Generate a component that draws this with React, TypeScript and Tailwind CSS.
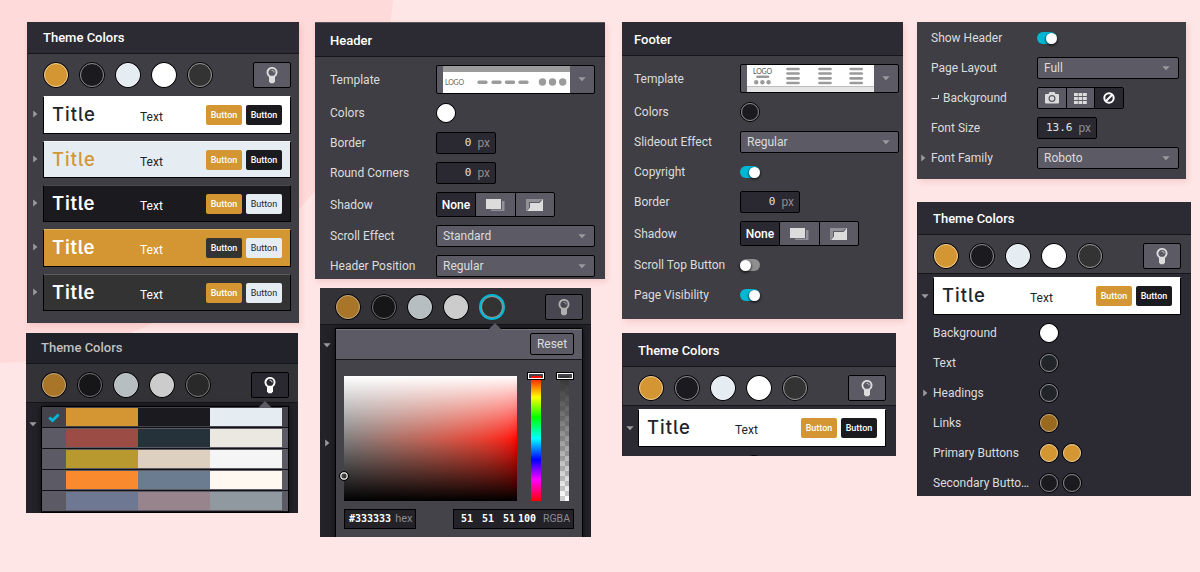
import type { ReactNode } from "react";

const ROBOTO = "font-['Roboto','Liberation_Sans',sans-serif]";
const MONO = "font-['DejaVu_Sans_Mono','Liberation_Mono',monospace]";

function Bulb({ className }: { className: string }) {
  return (
    <svg width="12" height="17" viewBox="0 0 12 17" className={className} fill="none">
      <path d="M3.8 9.6C2.5 8.4 1.4 7.3 1.4 5.4A4.6 4.5 0 0 1 10.600 5.4C10.600 7.3 9.500 8.4 8.200 9.6" stroke="currentColor" strokeWidth="1.9" />
      <path d="M3 8.8H9V14.2L7.6 16.2H4.4L3 14.2Z" fill="currentColor" />
      <path d="M5.6 3.3C7.2 3.2 8 4 8 5.4" stroke="currentColor" strokeWidth="1" />
    </svg>
  );
}

function BulbButton({ tone = "normal" }: { tone?: "normal" | "dim" | "active" }) {
  const tones = {
    normal: "bg-[#5b5a65] text-[#dcdcdc]",
    dim: "bg-[#484751] text-[#b0b0b0]",
    active: "bg-[#2a2932] text-white",
  };
  return (
    <div className={`flex h-[26px] w-[38px] items-center justify-center rounded-[2px] border border-black ${tones[tone]}`}>
      <Bulb className="block" />
    </div>
  );
}

function Swatch({ fill, ring, small }: { fill: string; ring: string; small?: boolean }) {
  return (
    <div className={`shrink-0 rounded-full border border-black ${small ? "size-5" : "size-[26px]"}`}>
      <div className={`size-full rounded-full border ${fill} ${ring}`} />
    </div>
  );
}

const BRIGHT = [
  ["bg-[#d39632]", "border-[#f0cf94]"],
  ["bg-[#1b1b1f]", "border-[#8c8c8e]"],
  ["bg-[#e5ecf2]", "border-[#f2f6f9]"],
  ["bg-white", "border-white"],
  ["bg-[#333333]", "border-[#969696]"],
];
const DIM = [
  ["bg-[#a97629]", "border-[#c4a87b]"],
  ["bg-[#161619]", "border-[#707072]"],
  ["bg-[#b7bec2]", "border-[#c2c6c9]"],
  ["bg-[#cccccc]", "border-[#cfcfcf]"],
  ["bg-[#292929]", "border-[#787878]"],
];

function SwatchRow({ dim, active, tone }: { dim?: boolean; active?: boolean; tone?: "normal" | "dim" | "active" }) {
  return (
    <div className="flex w-[248px] items-center justify-between">
      <div className="flex gap-2.5">
        {(dim ? DIM : BRIGHT).map(([fill, ring], i) =>
          active && i === 4 ? (
            <div key={i} className="size-[26px] rounded-full bg-[#00b8d4] p-[2px]">
              <div className="size-full rounded-full border border-[#a09a98] bg-[#333333]" />
            </div>
          ) : (
            <Swatch key={i} fill={fill} ring={ring} />
          ),
        )}
      </div>
      <BulbButton tone={tone} />
    </div>
  );
}

function Caret({ down, className = "" }: { down?: boolean; className?: string }) {
  return down ? (
    <svg width="8" height="5" viewBox="0 0 8 5" className={`shrink-0 ${className}`}>
      <path d="M0.3 0.3H7.7L4 4.3Z" fill="#9a9a9d" />
    </svg>
  ) : (
    <svg width="5" height="8" viewBox="0 0 5 8" className={`shrink-0 ${className}`}>
      <path d="M0.2 0.5V7.5L4.4 4Z" fill="#9a9a9d" />
    </svg>
  );
}

type CardProps = { bg: string; title: string; text: string; b1: string; b2: string; height?: string };

function Card({ bg, title, text, b1, b2, height = "h-[38px]" }: CardProps) {
  return (
    <div className={`flex w-[248px] shrink-0 items-start border border-black pl-2 ${height} ${bg}`}>
      <div className={`w-[88px] pt-1 font-['Inter','Noto_Sans',sans-serif] text-[18.500px] leading-[26px] [font-feature-settings:'cv05'] ${title}`}>
        Title
      </div>
      <div className={`w-[66px] pt-[11px] text-[12px] leading-[18px] ${text}`}>Text</div>
      <div className="flex gap-1 pt-2 text-[9px] leading-[21px]">
        <div className={`h-5 w-9 rounded-[2px] text-center ${b1}`}>Button</div>
        <div className={`h-5 w-9 rounded-[2px] text-center ${b2}`}>Button</div>
      </div>
    </div>
  );
}

const GOLD = "bg-[#d39632] text-white font-medium";
const INK = "bg-[#1b1b1f] text-white font-medium";
const ICE = "bg-[#e5ecf2] text-[#23262b]";
const MEDIUM = "font-medium tracking-[1px]";
const STRONG = "font-semibold tracking-[0.7px] text-white";

const CARDS: CardProps[] = [
  { bg: "bg-white border-t-white", title: `text-[#212529] ${MEDIUM}`, text: "text-[#212529]", b1: GOLD, b2: INK },
  { bg: "bg-[#e5ecf2] border-t-[#f2f6f9]", title: `text-[#d39632] ${MEDIUM}`, text: "text-[#212529]", b1: GOLD, b2: INK, height: "h-[37px]" },
  { bg: "bg-[#1b1b1f] border-t-[#4a4a4e]", title: STRONG, text: "text-white", b1: GOLD, b2: ICE, height: "h-[37px]" },
  { bg: "bg-[#d39632] border-t-[#e3b263]", title: STRONG, text: "text-white", b1: "bg-[#333333] text-white font-medium", b2: ICE },
  { bg: "bg-[#333333] border-t-[#5c5c5c]", title: STRONG, text: "text-white", b1: GOLD, b2: ICE, height: "h-[37px]" },
];

function PanelTitle({ children, className }: { children: ReactNode; className: string }) {
  return (
    <div className={`flex shrink-0 items-center border-b border-[#16161a] text-[13px] font-medium ${className}`}>{children}</div>
  );
}

function Row({ label, children, height = "h-[30px]", width = "w-[106px]" }: { label?: ReactNode; children: ReactNode; height?: string; width?: string }) {
  return (
    <div className={`flex shrink-0 items-center ${height}`}>
      <div className={`flex shrink-0 items-center whitespace-nowrap ${width}`}>{label}</div>
      {children}
    </div>
  );
}

function Select({ children, width = "w-[159px]" }: { children: ReactNode; width?: string }) {
  return (
    <div className={`flex h-[22px] items-center justify-between rounded-[2px] border border-black bg-[#5b5a65] pr-2 pl-1.5 ${width}`}>
      {children}
      <Caret down />
    </div>
  );
}

function PxInput({ value }: { value: string }) {
  return (
    <div className="flex h-[22px] w-[60px] items-center justify-end rounded-[2px] border border-black bg-[#2a2932] pr-[5px]">
      <span className={`mr-1.5 text-[11px] text-[#e2e2e2] ${MONO}`}>{value}</span>
      <span className="text-[12px] text-[#8b8b90]">px</span>
    </div>
  );
}

function Toggle({ on }: { on?: boolean }) {
  return (
    <div className={`flex h-3 w-5 items-center rounded-full ${on ? "justify-end bg-[#00b8d4]" : "bg-[#8f8f8f]"}`}>
      <div className="size-[11px] rounded-full bg-white shadow-[0_1px_2px_1px_rgba(0,0,0,0.5)]" />
    </div>
  );
}

function ShadowPicker() {
  return (
    <div className="flex h-[25px] w-[119px] overflow-hidden rounded-[2px] border border-black bg-[#5b5a65]">
      <div className="flex w-[38px] shrink-0 items-center justify-center bg-[#2a2932] text-[12px] font-medium text-white">None</div>
      <div className="flex w-10 shrink-0 items-center justify-center border-l border-black">
        <svg width="19" height="12" viewBox="0 0 19 12">
          <path d="M16 2H18.500V12H5V10.500H16Z" fill="#929198" />
          <rect width="15" height="10" fill="#dcdcdc" />
        </svg>
      </div>
      <div className="flex w-[39px] shrink-0 items-center justify-center border-l border-black">
        <svg width="18" height="12" viewBox="0 0 18 12">
          <path d="M0 0H17V1H15L13 3H3V9L1 11V12H0Z" fill="#929198" />
          <path d="M17 0V12H1L4 8.500V4H13.500Z" fill="#dcdcdc" />
        </svg>
      </div>
    </div>
  );
}

function TemplateSelect({ children }: { children: ReactNode }) {
  return (
    <div className="flex h-[29px] w-[159px] items-center rounded-[2px] border border-black bg-[#5b5a65] pl-1.5">
      {children}
      <Caret down className="ml-2" />
    </div>
  );
}

function HeaderThumb() {
  return (
    <svg width="127" height="27" viewBox="0 0 127 27">
      <rect width="127" height="27" fill="#fff" />
      <rect width="127" height="6" fill="#9b9b9b" />
      <text x="2" y="18.600" fontSize="7" fill="#666" fontFamily="Lato, sans-serif" textLength="19">LOGO</text>
      <path d="M36 16.300H43M50 16.300H57M63.500 16.300H70.500M77 16.300H84" stroke="#9b9b9b" strokeWidth="3.400" strokeLinecap="round" />
      <circle cx="99.500" cy="16" r="3.700" fill="#9b9b9b" />
      <circle cx="109.500" cy="16" r="3.700" fill="#9b9b9b" />
      <circle cx="119.700" cy="16" r="3.700" fill="#9b9b9b" />
    </svg>
  );
}

function FooterThumb() {
  return (
    <svg width="127" height="27" viewBox="0 0 127 27">
      <rect width="127" height="27" fill="#fff" />
      <rect y="21" width="127" height="6" fill="#e4e4e4" />
      <rect y="21" width="127" height="1" fill="#bdbdbd" />
      <text x="6" y="8.600" fontSize="7" fill="#555" fontFamily="Lato, sans-serif" textLength="19">LOGO</text>
      <path d="M10.500 11.700H21" stroke="#9b9b9b" strokeWidth="2.600" strokeLinecap="round" />
      <circle cx="9.200" cy="17.300" r="2.200" fill="#9b9b9b" />
      <circle cx="15.400" cy="17.300" r="2.200" fill="#9b9b9b" />
      <circle cx="21.600" cy="17.300" r="2.200" fill="#9b9b9b" />
      {[40.5, 72.5, 103.7].map((x) =>
        [4, 8.5, 13.3, 18].map((y) => (
          <path key={`${x}-${y}`} d={`M${x} ${y}h11`} stroke="#9b9b9b" strokeWidth="2.700" strokeLinecap="round" />
        )),
      )}
    </svg>
  );
}

function ThemeCardsPanel() {
  return (
    <div className="ml-px h-[301px] w-[272px] border-l border-[#2c2b33] bg-[#3f3e45] shadow-[2px_3px_6px_rgba(180,60,60,0.15)]">
      <PanelTitle className="h-8 bg-[#2c2b33] pl-[15px] text-white">Theme Colors</PanelTitle>
      <div className="pt-2 pb-2 pl-[15px]">
        <SwatchRow />
      </div>
      <div className="flex flex-col gap-[7px]">
        {CARDS.map((card, i) => (
          <div key={i} className="flex items-center">
            <div className="w-[15px] pb-0.5 pl-[5px]">
              <Caret />
            </div>
            <Card {...card} />
          </div>
        ))}
      </div>
    </div>
  );
}

const PALETTES = [
  ["bg-[#d39632]", "bg-[#1b1b1f]", "bg-[#e5ecf2]"],
  ["bg-[#9a4c45]", "bg-[#25323a]", "bg-[#ebe8e2]"],
  ["bg-[#b89930]", "bg-[#ded0c0]", "bg-[#f5f5f5]"],
  ["bg-[#f98b2e]", "bg-[#6b7b90]", "bg-[#fef8f0]"],
  ["bg-[#6e7893]", "bg-[#98848c]", "bg-[#8f999f]"],
];

function PalettePanel() {
  return (
    <div className="mt-2.5 h-[180px] w-[272px] overflow-hidden bg-[#222228]">
      <PanelTitle className="h-[31px] bg-[#22222a] pl-[15px] text-[#c0c0c2]">Theme Colors</PanelTitle>
      <div className="h-[39px] border-b border-[#16161a] bg-[#333237] pt-2 pl-[15px]">
        <SwatchRow dim tone="active" />
      </div>
      <div className="flex pt-[3px]">
        <div className="w-[15px] pt-4 pl-[3px]">
          <Caret down />
        </div>
        <div className="relative w-[248px] border border-black bg-[#5b5a65] shadow-[0_0_6px_rgba(0,0,0,0.6)]">
          <svg width="14" height="7" viewBox="0 0 14 7" className="absolute -top-[6px] right-[16px]">
            <path d="M7 0L14 7H0Z" fill="#5b5a65" />
          </svg>
          {PALETTES.map((colors, i) => (
            <div key={i} className={`flex h-[21px] border-b border-[#111116] pt-px ${i === 0 ? "bg-[#44434b]" : ""}`}>
              <div className="flex w-6 items-center justify-center">
                {i === 0 && (
                  <svg width="12" height="10" viewBox="0 0 12 10">
                    <path d="M1.200 4.500L4.500 7.600L10.600 1.500" stroke="#00b8d4" strokeWidth="2.800" fill="none" />
                  </svg>
                )}
              </div>
              {colors.map((c) => (
                <div key={c} className={`h-[18px] w-[72px] ${c}`} />
              ))}
            </div>
          ))}
        </div>
      </div>
    </div>
  );
}

function HeaderPanel() {
  return (
    <div className="h-[257px] w-[290px] overflow-hidden border-t border-[#55545c] bg-[#3f3e45] shadow-[2px_3px_6px_rgba(180,60,60,0.15)]">
      <PanelTitle className="h-[34px] bg-[#2c2b33] pt-[3px] pl-[15px] text-white">Header</PanelTitle>
      <div className="flex flex-col pt-1 pl-[15px]">
        <Row label="Template" height="h-[37px]">
          <TemplateSelect><HeaderThumb /></TemplateSelect>
        </Row>
        <Row label="Colors"><Swatch small fill="bg-white" ring="border-white" /></Row>
        <Row label="Border"><PxInput value="0" /></Row>
        <Row label="Round Corners"><PxInput value="0" /></Row>
        <Row label="Shadow" height="h-[33px]"><ShadowPicker /></Row>
        <Row label="Scroll Effect"><Select>Standard</Select></Row>
        <Row label="Header Position"><Select>Regular</Select></Row>
      </div>
    </div>
  );
}

function SliderHandle() {
  return <div className="absolute -top-1 -left-1 h-2 w-[18px] border border-black p-px shadow-[inset_0_0_0_1px_white]" />;
}

function PickerPanel() {
  return (
    <div className="mt-[9px] ml-[5px] h-[249px] w-[271px] overflow-hidden bg-[#222228]">
      <div className="h-[37px] border-b border-[#16161a] bg-[#333237] pt-1.5 pl-[15px]">
        <SwatchRow dim active tone="dim" />
      </div>
      <div className="flex pt-[3px]">
        <div className="flex w-[15px] flex-col gap-[91px] pt-[15px] pl-[3px]">
          <Caret down />
          <Caret className="ml-0.5" />
        </div>
        <div className="relative h-[212px] w-[248px] border border-black bg-[#44434a] shadow-[0_0_6px_rgba(0,0,0,0.6)]">
          <svg width="14" height="7" viewBox="0 0 14 7" className="absolute -top-[6px] left-[152px]">
            <path d="M7 0L14 7H0Z" fill="#5b5a65" />
          </svg>
          <div className="flex h-[31px] justify-end border-t border-b border-t-[#77767e] border-b-[#16161a] bg-[#5b5a65] pt-[3px] pr-2">
            <div className="flex h-[22px] w-11 items-center justify-center rounded-[2px] border border-black">Reset</div>
          </div>
          <div className="flex px-2 pt-4">
            <div className="relative h-[125px] w-[173px] bg-linear-to-r from-[#808080] to-[#ff0000]">
              <div className="h-full bg-[linear-gradient(to_bottom,#fff,rgba(255,255,255,0)_50%,rgba(0,0,0,0)_50%,#000)]" />
              <div className="absolute -left-[5px] top-[95px] size-[10px] rounded-full border border-black shadow-[inset_0_0_0_1.500px_#ddd]" />
            </div>
            <div className="relative ml-3.5 h-[125px] w-2.5 bg-[linear-gradient(to_bottom,#f00,#ff0_17%,#0f0_33%,#0ff_50%,#00f_67%,#f0f_83%,#f00)]">
              <SliderHandle />
            </div>
            <div className="relative ml-[19px] h-[125px] w-[9px] bg-[repeating-conic-gradient(#fff_0_25%,#d0d0d0_0_50%)] bg-[length:10px_10px]">
              <div className="h-full bg-linear-to-b from-[#333333] to-transparent" />
              <SliderHandle />
            </div>
          </div>
          <div className={`flex justify-between pt-2 pr-2 pl-2 text-[10px] font-bold text-white ${MONO}`}>
            <div className="flex h-5 w-[72px] items-center border border-black bg-[#222228] pl-1">
              #333333
              <span className={`ml-1 text-[11px] font-normal text-[#8b8b90] ${ROBOTO}`}>hex</span>
            </div>
            <div className="flex h-5 w-[121px] items-center border border-black bg-[#222228] pl-[7px]">
              <span className="w-[21px]">51</span>
              <span className="w-[21px]">51</span>
              <span className="w-[15px]">51</span>
              <span className="w-[25px]">100</span>
              <span className={`text-[10.500px] font-normal text-[#8b8b90] ${ROBOTO}`}>RGBA</span>
            </div>
          </div>
        </div>
      </div>
    </div>
  );
}

function FooterPanel() {
  return (
    <div className="h-[297px] w-[281px] bg-[#3f3e45] shadow-[2px_3px_6px_rgba(180,60,60,0.15)]">
      <PanelTitle className="h-[34px] bg-[#2c2b33] pt-[2px] pl-3 text-white">Footer</PanelTitle>
      <div className="flex flex-col pt-1 pl-3">
        <Row label="Template" height="h-[37px]">
          <TemplateSelect><FooterThumb /></TemplateSelect>
        </Row>
        <Row label="Colors"><Swatch small fill="bg-[#1b1b1f]" ring="border-[#8c8c8e]" /></Row>
        <Row label="Slideout Effect"><Select>Regular</Select></Row>
        <Row label="Copyright"><Toggle on /></Row>
        <Row label="Border"><PxInput value="0" /></Row>
        <Row label="Shadow" height="h-[33px]"><ShadowPicker /></Row>
        <Row label="Scroll Top Button"><Toggle /></Row>
        <Row label="Page Visibility"><Toggle on /></Row>
      </div>
    </div>
  );
}

function ThemeDetails() {
  return (
    <>
      <Row width="w-[121px]" label={<span className="ml-[15px]">Background</span>}>
        <Swatch small fill="bg-white" ring="border-white" />
      </Row>
      <Row width="w-[121px]" label={<span className="ml-[15px]">Text</span>}>
        <Swatch small fill="bg-[#212529]" ring="border-[#8f9193]" />
      </Row>
      <Row width="w-[121px]" label={<><Caret className="mr-[5px] ml-[5px]" />Headings</>}>
        <Swatch small fill="bg-[#212529]" ring="border-[#8f9193]" />
      </Row>
      <Row width="w-[121px]" label={<span className="ml-[15px]">Links</span>}>
        <Swatch small fill="bg-[#99691f]" ring="border-[#c9ac7c]" />
      </Row>
      <Row width="w-[121px]" label={<span className="ml-[15px]">Primary Buttons</span>}>
        <div className="flex gap-[3px]">
          <Swatch small fill="bg-[#d39632]" ring="border-[#f0cf94]" />
          <Swatch small fill="bg-[#d39632]" ring="border-[#f0cf94]" />
        </div>
      </Row>
      <Row width="w-[121px]" label={<span className="ml-[15px]">Secondary Butto…</span>}>
        <div className="flex gap-[3px]">
          <Swatch small fill="bg-[#1b1b1f]" ring="border-[#8c8c8e]" />
          <Swatch small fill="bg-[#1b1b1f]" ring="border-[#8c8c8e]" />
        </div>
      </Row>
    </>
  );
}

function ExpandedTheme({ compact }: { compact?: boolean }) {
  return (
    <div className={`w-[274px] overflow-hidden border-l border-[#24232a] bg-[#2c2b33] ${compact ? "mt-3.5 h-[123px]" : "mt-[23px] h-[294px]"}`}>
      <PanelTitle className={`pt-[2px] pl-[15px] text-white ${compact ? "h-[34px]" : "h-[33px]"}`}>Theme Colors</PanelTitle>
      <div className="h-[39px] border-b border-[#16161a] bg-[#3f3e45] pt-2 pl-[15px]">
        <SwatchRow />
      </div>
      <div className="flex items-center pt-[3px]">
        <div className="w-[15px] pl-[3px]">
          <Caret down />
        </div>
        <Card {...CARDS[0]} />
      </div>
      <div className="flex flex-col pt-[3px]">
        {compact ? (
          <Row width="w-[121px]">
            <Swatch small fill="bg-white" ring="border-white" />
          </Row>
        ) : (
          <ThemeDetails />
        )}
      </div>
    </div>
  );
}

function PagePanel() {
  return (
    <div className="flex h-[157px] w-[269px] flex-col bg-[#3f3e45] pt-px shadow-[2px_3px_6px_rgba(180,60,60,0.15)]">
      <Row width="w-[120px]" label={<span className="ml-3.5">Show Header</span>}><Toggle on /></Row>
      <Row width="w-[120px]" label={<span className="ml-3.5">Page Layout</span>}><Select width="w-[142px]">Full</Select></Row>
      <Row
        width="w-[120px]"
        label={
          <>
            <svg width="8" height="6" viewBox="0 0 8 6" className="mr-1 ml-3.5">
              <path d="M0.500 3.500H7.500V0" stroke="#dcdcdc" fill="none" />
            </svg>
            Background
          </>
        }
      >
        <div className="flex h-[22px] w-[87px] overflow-hidden rounded-[2px] border border-black bg-[#5b5a65]">
          <div className="flex w-7 items-center justify-center">
            <svg width="14" height="12" viewBox="0 0 14 12">
              <path fillRule="evenodd" d="M1 2H3.500L4.500 0H9.500L10.500 2H13Q14 2 14 3V10.500Q14 11.500 13 11.500H1Q0 11.500 0 10.500V3Q0 2 1 2ZM7 3A3.500 3.500 0 1 0 7 10A3.500 3.500 0 1 0 7 3ZM7 4.200A2.300 2.300 0 1 1 7 8.800A2.300 2.300 0 1 1 7 4.200Z" fill="#dcdcdc" />
            </svg>
          </div>
          <div className="flex w-[29px] items-center justify-center border-x border-black">
            <svg width="13" height="11" viewBox="0 0 13 11" fill="#dcdcdc">
              {[0, 4, 8].map((y) => [0, 4.5, 9].map((x) => <rect key={`${x}-${y}`} x={x} y={y} width="3.800" height="3" />))}
            </svg>
          </div>
          <div className="flex w-7 items-center justify-center bg-[#2a2932]">
            <svg width="12" height="12" viewBox="0 0 12 12" fill="none" stroke="#fff" strokeWidth="2">
              <circle cx="6" cy="6" r="4.700" />
              <path d="M9.200 2.800L2.800 9.200" />
            </svg>
          </div>
        </div>
      </Row>
      <Row width="w-[120px]" label={<span className="ml-3.5">Font Size</span>}><PxInput value="13.6" /></Row>
      <Row width="w-[120px]" label={<><Caret className="mr-[5px] ml-1" />Font Family</>}><Select width="w-[142px]">Roboto</Select></Row>
    </div>
  );
}

export default function App() {
  return (
    <div className={`grid h-[572px] w-[1200px] overflow-hidden bg-[#ffe6e6] text-[12px] leading-4 text-[#dcdcdc] ${ROBOTO}`}>
      <svg width="400" height="370" viewBox="0 0 400 370" className="[grid-area:1/1]">
        <path d="M0 0H393L392 10C385 80 355 147 310 197C262 252 205 300 140 329C105 345 60 357 20 362L0 363Z" fill="#ffdada" />
      </svg>
      <div className="z-10 flex items-start pt-[22px] pl-[26px] [grid-area:1/1]">
        <div className="w-[289px]">
          <ThemeCardsPanel />
          <PalettePanel />
        </div>
        <div className="w-[307px]">
          <HeaderPanel />
          <PickerPanel />
        </div>
        <div className="w-[295px]">
          <FooterPanel />
          <ExpandedTheme compact />
        </div>
        <div>
          <PagePanel />
          <ExpandedTheme />
        </div>
      </div>
    </div>
  );
}
